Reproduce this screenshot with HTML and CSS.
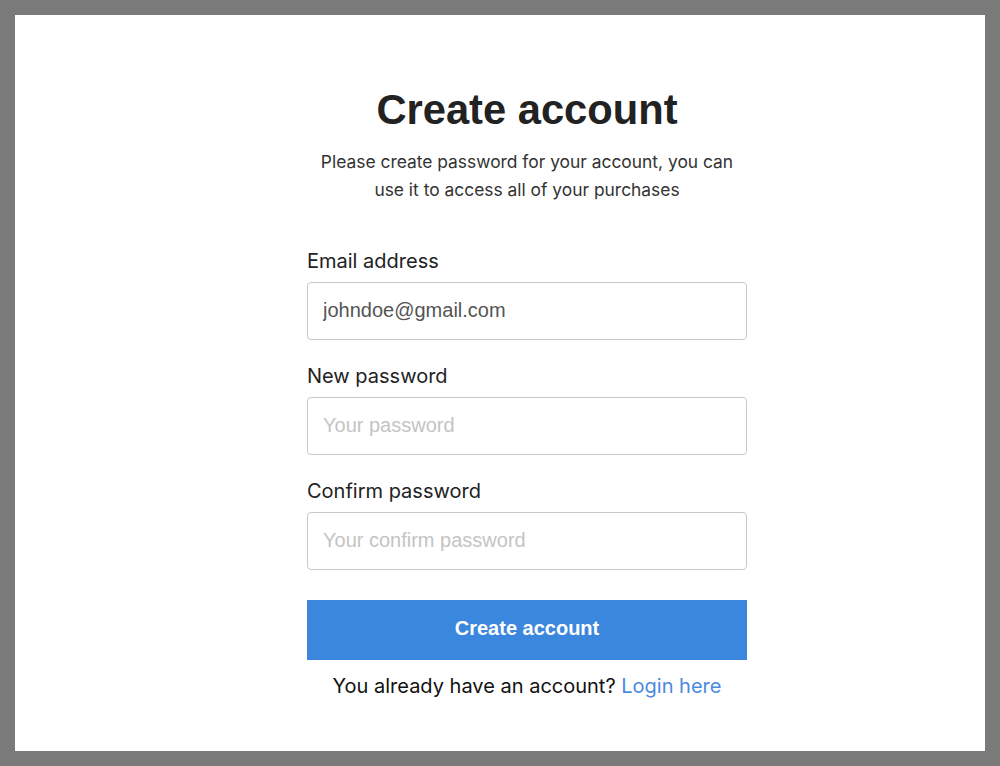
FILE: index.html
```html
<!DOCTYPE html>
<html lang="en">
<head>
<meta charset="utf-8">
<title>Create account</title>
<link rel="stylesheet" href="styles.css">
</head>
<body>
<div class="card">
  <form class="form">
    <h1 class="title">Create account</h1>
    <p class="subtitle">Please create password for your account, you can<br>use it to access all of your purchases</p>
    <div class="field">
      <label class="label" for="email">Email address</label>
      <input class="input" id="email" type="email" value="johndoe@gmail.com">
    </div>
    <div class="field">
      <label class="label" for="pw">New password</label>
      <input class="input" id="pw" type="password" placeholder="Your password">
    </div>
    <div class="field">
      <label class="label" for="pw2">Confirm password</label>
      <input class="input" id="pw2" type="password" placeholder="Your confirm password">
    </div>
    <button class="btn" type="button">Create account</button>
    <p class="footer">You already have an account? <a class="link" href="#">Login here</a></p>
  </form>
</div>
</body>
</html>
```
FILE: styles.css
```css
html, body {
  margin: 0;
  padding: 0;
}
body {
  background: #7a7a7a;
  padding: 15px;
  height: 766px;
  box-sizing: border-box;
  font-family: Inter, "Noto Sans", sans-serif;
}
.card {
  background: #fff;
  height: 736px;
  display: flex;
  justify-content: center;
  padding-left: 54px;
  box-sizing: border-box;
}
.form {
  width: 440px;
  display: flex;
  flex-direction: column;
  padding-top: 71px;
}
.title {
  margin: 0;
  text-align: center;
  font-family: "Liberation Sans", Arial, sans-serif;
  font-size: 41.7px;
  font-weight: 700;
  color: #222;
  line-height: 48px;
}
.subtitle {
  margin: 14px 0 0;
  text-align: center;
  font-size: 17.4px;
  line-height: 28px;
  color: #333;
}
.field {
  display: flex;
  flex-direction: column;
}
.field:first-of-type {
  margin-top: 43px;
}
.field + .field {
  margin-top: 22px;
}
.label {
  font-size: 20px;
  line-height: 28px;
  color: #222;
  margin-bottom: 7px;
}
.input {
  height: 58px;
  box-sizing: border-box;
  border: 1px solid #c8c8c8;
  border-radius: 4px;
  padding: 0 15px 2px;
  font-family: "Liberation Sans", Arial, sans-serif;
  font-size: 20px;
  color: #555;
  outline: none;
}
.input::placeholder {
  color: #c4c4c4;
}
.btn {
  margin-top: 30px;
  height: 60px;
  border: none;
  background: #3b87dd;
  color: #fff;
  padding: 0 0 4px;
  font-family: "Liberation Sans", Arial, sans-serif;
  font-size: 20px;
  font-weight: 700;
}
.footer {
  margin: 12px 0 0;
  text-align: center;
  font-size: 20px;
  line-height: 28px;
  color: #111;
}
.link {
  color: #4a8ae0;
  text-decoration: none;
}
```
